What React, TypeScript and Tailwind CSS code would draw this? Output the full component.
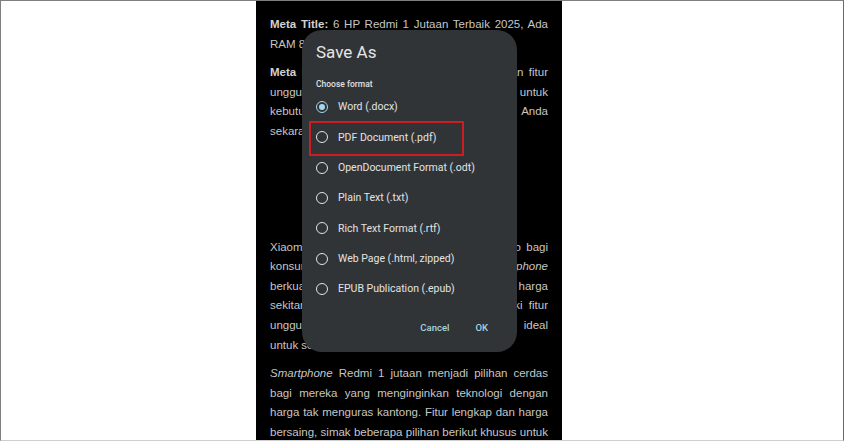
import React from "react";

const J = "whitespace-nowrap text-justify [text-align-last:justify]";

function Line({ children, last = false }: { children: React.ReactNode; last?: boolean }) {
  return (
    <div className={last ? "whitespace-nowrap" : J}>{children}</div>
  );
}

function Radio({ selected = false }: { selected?: boolean }) {
  return selected ? (
    <div className="w-[12px] h-[12px] rounded-full border-[1.5px] border-[#a6d6ec] flex items-center justify-center shrink-0">
      <div className="w-[6px] h-[6px] rounded-full bg-[#a6d6ec]" />
    </div>
  ) : (
    <div className="w-[12px] h-[12px] rounded-full border-[1.5px] border-[#e4e4e4] shrink-0" />
  );
}

const options = [
  "Word (.docx)",
  "PDF Document (.pdf)",
  "OpenDocument Format (.odt)",
  "Plain Text (.txt)",
  "Rich Text Format (.rtf)",
  "Web Page (.html, zipped)",
  "EPUB Publication (.epub)",
];

export default function App() {
  return (
    <div className="w-[845px] h-[442px] bg-white">
      <div className="w-[844px] h-[441px] border border-[#7f7f7f] border-r-[#6a6a6a] border-b-[#cfcfcf] flex pl-[255px]">
        <div
          className="relative w-[306px] h-full bg-black overflow-hidden px-[14px] pt-[14px] text-[#c6c6c6] text-[11.5px] leading-[19.6px]"
          style={{ fontFamily: '"Liberation Sans", Arial, sans-serif' }}
        >
          <div className="mb-[9px]">
            <Line>
              <b className="text-[#d2d2d2]">Meta Title:</b> 6 HP Redmi 1 Jutaan Terbaik 2025, Ada
            </Line>
            <Line last>RAM 8GB dan Kamera Jernih!</Line>
          </div>
          <div className="mb-[9px]">
            <Line>
              <b className="text-[#d2d2d2]">Meta Description:</b> Temukan HP murah dengan fitur
            </Line>
            <Line>unggulan terbaik dengan harga hemat untuk</Line>
            <Line>kebutuhan harian Anda. Pilih yang tepat Anda</Line>
            <Line last>sekarang juga!</Line>
          </div>
          <div className="h-[87px]" />
          <div className="mb-[9px]">
            <Line>Xiaomi terus menghadirkan produk Redmi jago bagi</Line>
            <Line>
              konsumen Indonesia, termasuk lini <i>smartphone</i>
            </Line>
            <Line>berkualitas dengan banderol murah di kisaran harga</Line>
            <Line>sekitar 1 jutaan. Meski murah, HP ini memiliki fitur</Line>
            <Line>unggulan yang lengkap sehingga sangat ideal</Line>
            <Line last>untuk semua kalangan.</Line>
          </div>
          <div>
            <Line>
              <i>Smartphone</i> Redmi 1 jutaan menjadi pilihan cerdas
            </Line>
            <Line>bagi mereka yang menginginkan teknologi dengan</Line>
            <Line>harga tak menguras kantong. Fitur lengkap dan harga</Line>
            <Line>bersaing, simak beberapa pilihan berikut khusus untuk</Line>
          </div>

          {/* Dialog */}
          <div
            className="absolute left-[46px] top-[29px] w-[215px] h-[322px] rounded-[20px] bg-[#303437] pt-[11px]"
            style={{ fontFamily: 'Roboto, "Noto Sans", sans-serif' }}
          >
            <div className="px-[14px] text-[17px] leading-[22px] text-[#e6e6e6]">Save As</div>
            <div className="px-[14px] mt-[15px] text-[8.5px] leading-[12px] font-medium text-[#e0e0e0]">
              Choose format
            </div>
            <div className="mt-[2px]">
              {options.map((o, i) => (
                <div key={o} className="h-[30.3px] flex items-center pl-[14px] gap-[10px]">
                  <Radio selected={i === 0} />
                  <span className="text-[10.5px] text-[#e3e3e3] whitespace-nowrap">{o}</span>
                </div>
              ))}
            </div>
            <div className="mt-[14px] h-[20px] flex items-center justify-end gap-[26px] pr-[29px] text-[9.5px] font-medium text-[#a9d3dd]">
              <span>Cancel</span>
              <span>OK</span>
            </div>
            <div className="absolute left-[7px] top-[91px] w-[155px] h-[35px] border-2 border-[#cc1d23]" />
          </div>
        </div>
      </div>
    </div>
  );
}
